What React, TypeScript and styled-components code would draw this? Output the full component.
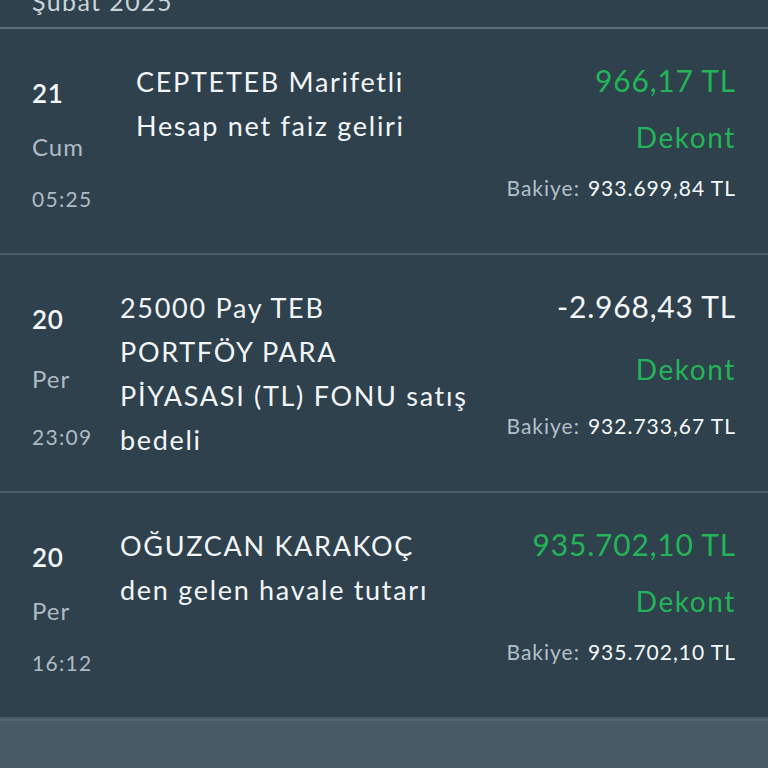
import * as React from "react";
import styled, { createGlobalStyle } from "styled-components";

const GlobalStyle = createGlobalStyle`
  html, body {
    margin: 0;
    padding: 0;
    background: #2e414d;
  }

  body {
    font-family: Lato, "Open Sans", "DejaVu Sans", sans-serif;
    color: #f3f6f8;
    overflow: hidden;
  }
`;

const Page = styled.div`
  display: flex;
  flex-direction: column;
  height: 768px;
  background: #2e414d;
`;

const MonthHeader = styled.div`
  height: 27px;
  padding-left: 32px;
  border-bottom: 2px solid #5b6d78;
  overflow: hidden;
`;

const MonthTitle = styled.div`
  margin-top: -12px;
  font-size: 25px;
  line-height: 26px;
  letter-spacing: 1.4px;
  color: #c9d3d9;
`;

const Row = styled.div<{ $minHeight: number }>`
  display: flex;
  min-height: ${(p) => p.$minHeight}px;
  padding: 0 32px;
  border-bottom: 2px solid #4a5c67;
`;

const DateCol = styled.div`
  display: flex;
  flex-direction: column;
  justify-content: space-between;
  width: 88px;
  flex-shrink: 0;
  padding: 47px 0 39px;
`;

const Day = styled.div`
  font-size: 26px;
  line-height: 34px;
  font-weight: 600;
  letter-spacing: 0.6px;
  color: #f5f8fa;
`;

const WeekDay = styled.div`
  font-size: 24px;
  line-height: 34px;
  letter-spacing: 1px;
  color: #aebbc4;
`;

const Time = styled.div`
  font-size: 21px;
  line-height: 30px;
  letter-spacing: 1.3px;
  color: #aebbc4;
`;

const Description = styled.div<{ $indent: number }>`
  flex: 1;
  padding: 31px 0 29px ${(p) => p.$indent}px;
  font-size: 27px;
  line-height: 44px;
  letter-spacing: 1.7px;
  color: #f3f6f8;
`;

const DescLine = styled.div`
  white-space: nowrap;
`;

const AmountCol = styled.div`
  display: flex;
  flex-direction: column;
  justify-content: space-between;
  align-items: flex-end;
  padding: 31px 0 50px;
`;

const Amount = styled.div<{ $positive: boolean }>`
  font-size: 30px;
  line-height: 40px;
  letter-spacing: 0.8px;
  color: ${(p) => (p.$positive ? "#22b457" : "#f5f8fa")};
  white-space: nowrap;
`;

const Receipt = styled.div`
  font-size: 28px;
  line-height: 40px;
  letter-spacing: 1.6px;
  color: #22b457;
`;

const Balance = styled.div`
  display: flex;
  gap: 8px;
  font-size: 21px;
  line-height: 30px;
  letter-spacing: 1px;
  white-space: nowrap;
`;

const BalanceLabel = styled.span`
  color: #b3c0c8;
`;

const BalanceValue = styled.span`
  color: #f5f8fa;
`;

const Footer = styled.div`
  flex: 1;
  background: #475a66;
  border-top: 2px solid #53656f;
`;

type Transaction = {
  day: string;
  weekDay: string;
  time: string;
  lines: string[];
  amount: string;
  positive: boolean;
  balance: string;
  indent: number;
  minHeight: number;
};

const transactions: Transaction[] = [
  {
    day: "21",
    weekDay: "Cum",
    time: "05:25",
    lines: ["CEPTETEB Marifetli", "Hesap net faiz geliri"],
    amount: "966,17 TL",
    positive: true,
    balance: "933.699,84 TL",
    indent: 16,
    minHeight: 224,
  },
  {
    day: "20",
    weekDay: "Per",
    time: "23:09",
    lines: ["25000 Pay TEB", "PORTFÖY PARA", "PİYASASI (TL) FONU satış", "bedeli"],
    amount: "-2.968,43 TL",
    positive: false,
    balance: "932.733,67 TL",
    indent: 0,
    minHeight: 236,
  },
  {
    day: "20",
    weekDay: "Per",
    time: "16:12",
    lines: ["OĞUZCAN KARAKOÇ", "den gelen havale tutarı"],
    amount: "935.702,10 TL",
    positive: true,
    balance: "935.702,10 TL",
    indent: 0,
    minHeight: 224,
  },
];

const App = () => {
  return (
    <Page>
      <GlobalStyle />
      <MonthHeader>
        <MonthTitle>Şubat 2025</MonthTitle>
      </MonthHeader>
      {transactions.map((t, i) => (
        <Row key={i} $minHeight={t.minHeight}>
          <DateCol>
            <Day>{t.day}</Day>
            <WeekDay>{t.weekDay}</WeekDay>
            <Time>{t.time}</Time>
          </DateCol>
          <Description $indent={t.indent}>
            {t.lines.map((line) => (
              <DescLine key={line}>{line}</DescLine>
            ))}
          </Description>
          <AmountCol>
            <Amount $positive={t.positive}>{t.amount}</Amount>
            <Receipt>Dekont</Receipt>
            <Balance>
              <BalanceLabel>Bakiye:</BalanceLabel>
              <BalanceValue>{t.balance}</BalanceValue>
            </Balance>
          </AmountCol>
        </Row>
      ))}
      <Footer />
    </Page>
  );
};

export default App;
